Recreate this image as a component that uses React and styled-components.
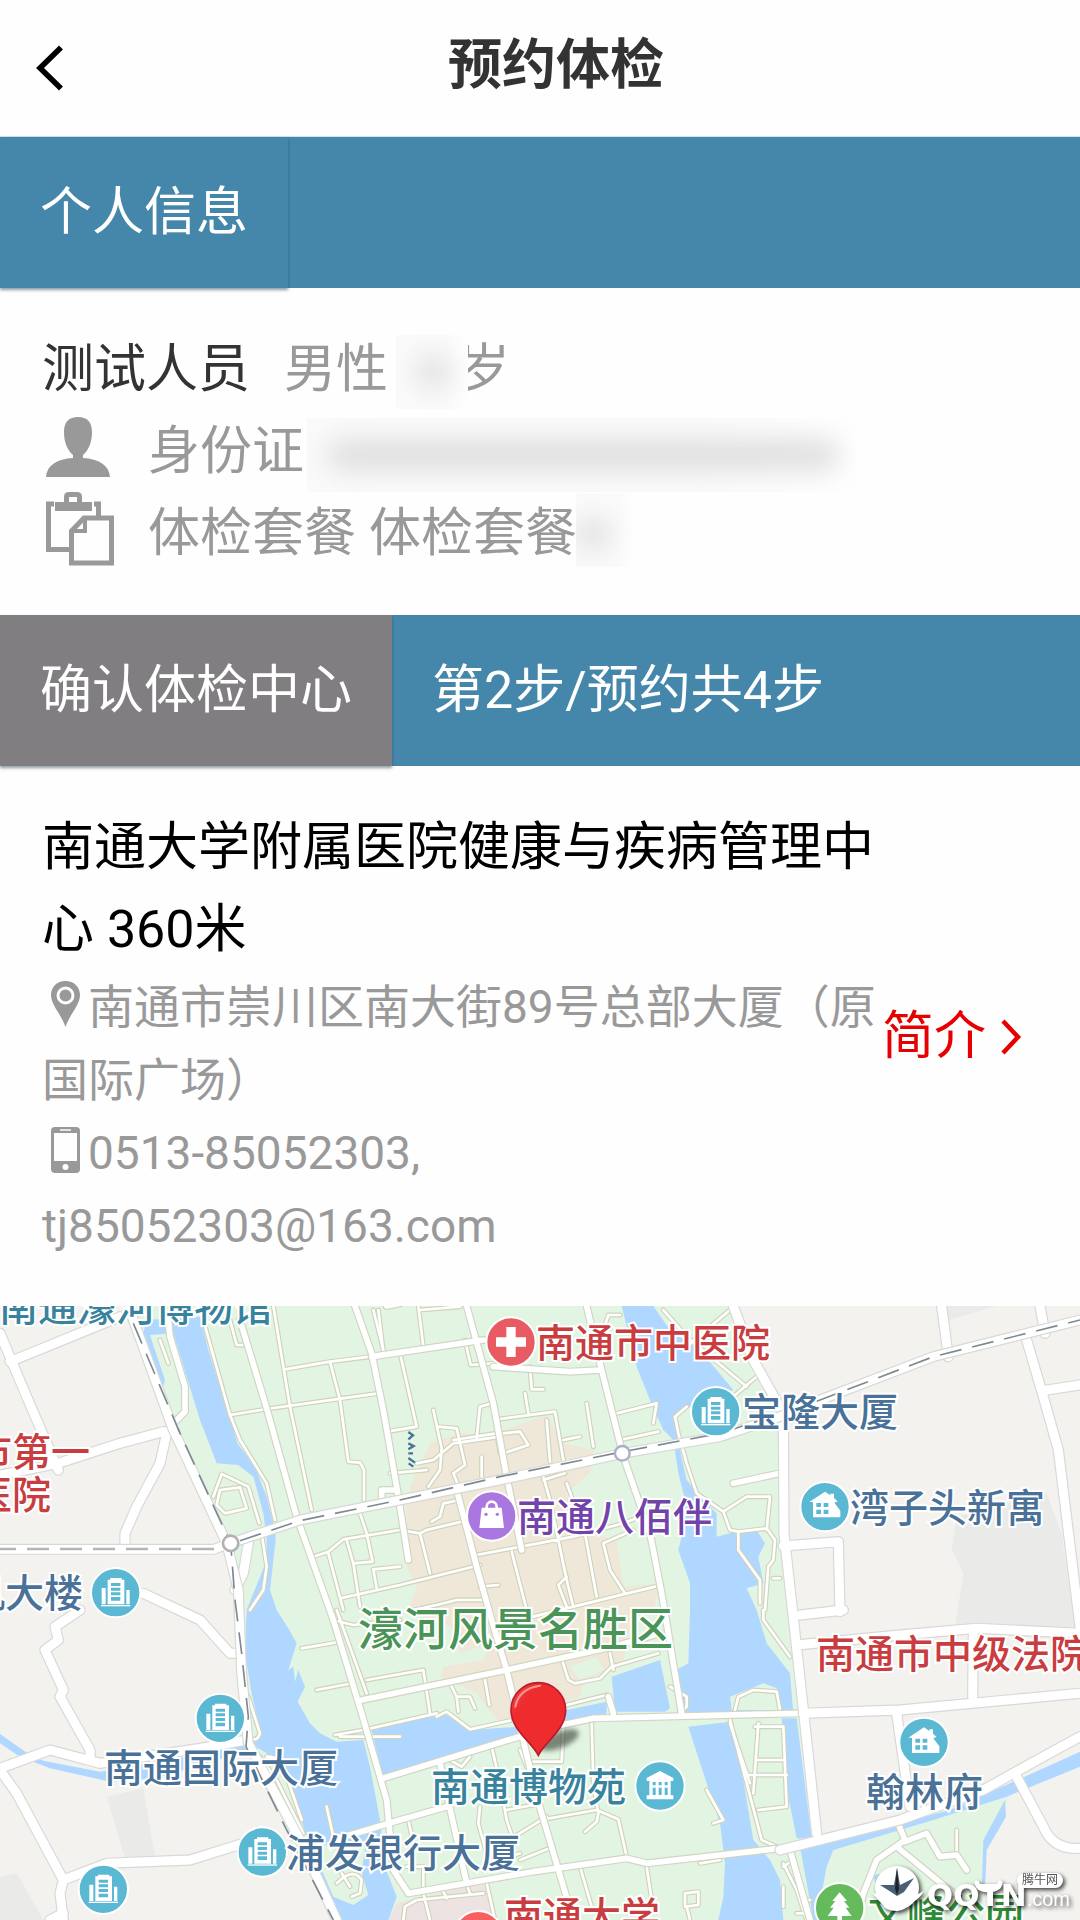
import React from 'react';
import styled, { createGlobalStyle } from 'styled-components';

const GlobalStyle = createGlobalStyle`
  * { box-sizing: border-box; }
  body {
    margin: 0;
    background: #fefefe;
    color: #333;
    font-family: Roboto, "Noto Sans CJK SC", sans-serif;
  }
  h1, h2, p { margin: 0; font-weight: 400; }
`;

const Page = styled.div`
  display: flex;
  flex-direction: column;
`;

const Header = styled.header`
  display: flex;
  align-items: center;
  height: 137px;
  padding: 0 48px 0 28px;
  border-bottom: 1px solid #cfe4ee;
`;

const BackButton = styled.button`
  display: flex;
  width: 52px;
  padding: 0 8px;
  border: 0;
  background: none;
`;

const Title = styled.h1`
  flex: 1;
  padding-bottom: 4px;
  font-size: 54px;
  font-weight: 700;
  line-height: 80px;
  text-align: center;
`;

const Bar = styled.div`
  display: flex;
  height: 151px;
  background: #4587aa;
  color: #fff;
  font-size: 52px;
  line-height: 151px;
`;

const Tab = styled.h2`
  padding: 0 40px;
  font-size: 52px;
  background: ${(p) => (p.$muted ? '#807e81' : '#4587aa')};
  box-shadow: 0 2px 3px rgba(30, 60, 80, 0.5);
`;

const Step = styled.p`
  padding: 0 40px;
`;

const Person = styled.section`
  padding: 41px 42px 40px;
  color: #999;
  font-size: 52px;
  line-height: 82px;
`;

const Row = styled.div`
  display: flex;
  align-items: center;
  height: 82px;
`;

const Name = styled.span`
  margin-right: 34px;
  color: #333;
`;

const IconCell = styled.span`
  display: flex;
  flex: none;
  width: 106px;
  padding: 0 0 10px 4px;
`;

const Hidden = styled.span`
  position: relative;
  display: inline-block;
  width: ${(p) => p.$space}px;
  height: 82px;
`;

const Smudge = styled.span`
  position: absolute;
  top: ${(p) => p.$top}px;
  left: ${(p) => p.$left}px;
  width: ${(p) => p.$width}px;
  height: 74px;
  overflow: hidden;
  background: linear-gradient(90deg, #fafafa 70%, #fefefe);

  &::before {
    content: '';
    position: absolute;
    inset: ${(p) => (p.$edge ? '26px 24px 18px 0' : '22px 18px 22px 20px')};
    border-radius: 16px;
    background: #dedede;
    filter: blur(13px);
  }
`;

const Center = styled.section`
  display: flex;
  align-items: center;
  padding: 0 42px;
`;

const CenterText = styled.div`
  flex: 0 1 840px;
  padding: 41px 0 43px;
`;

const CenterName = styled.h2`
  color: #000;
  font-size: 52px;
  line-height: 82px;
`;

const Detail = styled.p`
  color: #999;
  font-size: 46px;
  line-height: 73px;

  svg { margin: 0 8px 0 9px; vertical-align: -4px; }
`;

const Intro = styled.a`
  display: flex;
  flex: none;
  align-items: center;
  gap: 14px;
  padding-top: 2px;
  color: #e60000;
  font-size: 52px;
  line-height: 82px;
  text-decoration: none;
`;

const Map = styled.section`
  position: relative;
  height: 614px;
  overflow: hidden;
  background: #f3f2ef;
`;

const MapArt = styled.svg`
  display: block;
  width: 100%;
  height: 100%;
`;

const colours = {
  red: '#c93d40',
  blue: '#4a7298',
  teal: '#37839d',
  purple: '#7243a9',
  green: '#4a9458',
  darkGreen: '#2f8a37',
};

const Label = styled.span`
  position: absolute;
  left: ${(p) => p.$x}px;
  top: ${(p) => p.$y}px;
  color: ${(p) => colours[p.$tone]};
  font-size: ${(p) => (p.$large ? 45 : 39)}px;
  font-weight: 500;
  line-height: 64px;
  white-space: nowrap;
  paint-order: stroke fill;
  -webkit-text-stroke: 4px #fff;
`;

const Watermark = styled.div`
  position: absolute;
  right: 8px;
  bottom: 0;
  width: 200px;
  height: 58px;
  color: #fff;
  filter: drop-shadow(2px 2px 2px rgba(0, 0, 0, 0.75));
`;

const MarkLogo = styled.svg`
  position: absolute;
  left: 0;
  top: 3px;
`;

const MarkName = styled.span`
  position: absolute;
  right: 2px;
  bottom: 5px;
  display: flex;
  align-items: baseline;
  font: 700 31px/32px "DejaVu Sans", sans-serif;
`;

const MarkSuffix = styled.span`
  font: 400 20px/32px "Liberation Sans", sans-serif;
`;

const MarkBadge = styled.span`
  position: absolute;
  right: 9px;
  top: 11px;
  padding: 0 5px;
  border-radius: 8px;
  background: #fff;
  color: #555;
  font-size: 12px;
  line-height: 15px;
`;

const labels = [
  ['南通濠河博物馆', -1, -30, 'teal'],
  ['南通市中医院', 536, 6, 'red'],
  ['宝隆大厦', 742, 75, 'blue'],
  ['市第一', -27, 115, 'red'],
  ['医院', -27, 158, 'red'],
  ['湾子头新寓', 850, 171, 'blue'],
  ['南通八佰伴', 517, 180, 'purple'],
  ['机大楼', -34, 256, 'blue'],
  ['濠河风景名胜区', 358, 293, 'green', true],
  ['南通市中级法院', 816, 317, 'red'],
  ['南通国际大厦', 104, 431, 'blue'],
  ['南通博物苑', 431, 450, 'teal'],
  ['翰林府', 866, 455, 'blue'],
  ['浦发银行大厦', 286, 516, 'blue'],
  ['文峰公园', 868, 575, 'darkGreen'],
  ['南通大学', 504, 579, 'red'],
];

// The map is drawn at three units per pixel.
const water = [
  'M440 60L600 50L625 150L650 230L690 350L712 430L765 500L800 590L825 690L827 720L810 870L830 930L865 985L890 1030L865 1110L880 1100L885 1145L895 1110L915 1160L893 1205L930 1270L960 1300L1010 1325L1090 1320L1110 1400L1140 1560L1155 1700L1190 1790L1165 1860H1020L950 1690L910 1580L865 1430L800 1360L750 1330L780 1290L755 1180L735 1060L740 930L800 780L800 720L790 640L760 530L715 495L650 490L600 360L560 230L520 100L450 105L495 240L490 260L470 220L430 100Z',
  'M1115 1290L1330 1240L1410 1290L1560 1280L1700 1230L1820 1205V1240L1540 1310L1150 1435Z',
  'M1835 1130L1980 1080L2010 1225L1995 1235H1845Z',
  'M1865 18L1910 200L1950 300L1990 390L2020 420L2035 520L2055 600L2050 690L2035 750L2070 850V930L2065 1090L2020 1115L2045 1240H2380L2370 1120L2300 1030L2270 930L2240 865L2290 850L2275 770L2295 730L2270 690L2190 700L2150 710V640L2110 600L2060 540L2040 450L2020 350L2060 325L2200 270L2100 150L2010 90L1960 18Z',
  'M2065 1280L2190 1265L2230 1440L2260 1620L2310 1680L2340 1740L2350 1860H2155L2170 1790L2175 1690L2160 1570L2120 1450Z',
  'M2345 1255H2390L2435 1615H2390L2365 1490Z',
  'M2400 1640L2680 1575L2850 1530L3030 1450L3240 1355V1400L3020 1490L2800 1560L2500 1650L2480 1700L2465 1780L2475 1860H2440Z',
  'M3015 1500L2950 1620L2945 1780L2955 1770L2960 1650L3018 1550Z',
  'M0 1302L90 1365L130 1382L300 1415L560 1370L740 1330L750 1350L470 1435L330 1445L150 1405L60 1370L0 1330Z',
  'M2620 1725L2680 1715L2720 1770L2700 1840L2640 1800Z',
];

const beige =
  'M1225 600L1230 560L1290 430L1380 400L1480 400L1640 345L1690 430L1780 450L1770 520L1700 580L1730 690L1850 720L1870 860L1985 850L1960 930L1890 980L1870 1080L1750 1150L1740 1190L1560 1255L1490 1260L1430 1180L1320 1130L1330 1100L1450 1080L1470 1030L1380 1060L1350 980L1225 930L1250 860L1220 800V600Z';

const paths = [
  'M1110 170L990 185L855 208M820 18L870 320L935 630M990 185L1020 300L1045 485L1080 488L1092 510V600M1135 30L1150 155M610 60L690 345L720 420L800 550L825 660M690 345L800 327L1135 280M690 60L710 135H735',
  'M480 120L505 190M640 590L665 522L745 560L778 670M660 570L720 562L740 625L675 640L650 615Z',
  'M785 700L800 800L790 870L750 930M940 770L985 755L1030 718L1200 690M1080 640L1100 700L1118 785L1060 790L1040 720M1060 790L1080 920M985 760L1030 930M1020 895L1200 855L1440 795M1200 800L1120 808L1130 865',
  'M1260 30L1380 20M1255 18L1270 140M1150 150L1120 30M1395 120L1412 195L1480 190M1590 200L1595 268H1630M1575 280L1585 340M1500 357L1665 335L1690 480M1200 160L1250 380L1160 395M1300 330L1325 445L1320 510L1285 560M1315 380L1370 385L1395 495L1360 520L1380 570M1430 415L1440 320L1475 310M1360 420L1490 400L1500 460',
  'M1510 400L1560 395L1585 435L1510 460M1640 360L1650 485M1690 420L1740 410M1760 310L1780 440M1445 470V530M1170 520L1280 510M1250 490L1300 480L1360 430L1500 410M1850 340L1970 310M1860 420L1975 395M1970 310L1960 370M1810 90L1825 45H1860',
  'M1630 530L1650 600L1700 840L1720 920M1630 540L1695 520M1700 550L1755 700L1790 890M1430 765L1720 710L1870 670L1920 650M1535 755L1580 930M1280 690L1385 665M1280 690L1260 700L1200 690M1380 600L1330 610L1320 650L1295 665M1260 700L1290 820M1900 690L1810 730L1830 810L1875 880M1600 950L1720 920L1965 860M1700 830L1675 855L1700 920M1440 860L1495 855M1240 930L1310 915L1370 900H1450',
  'M1010 930L1100 1180M1100 1140L1270 1110L1290 1240M905 1045L1005 1028M950 1170L1045 1152M1005 1305L1090 1290M1000 960L1060 975L1200 960M1350 1150L1370 1190H1410L1425 1225M1370 1190L1375 1235M1455 1140L1468 1215M1310 1250L1340 1235L1410 1288L1530 1262M1090 1290L1310 1240M1200 1310L1020 1310M1820 1185L1700 1215',
  'M1685 1075L1705 1140L1725 1150L1800 1135L1835 1100L1975 1060M1830 1060L1840 1110M1350 1380L1385 1400L1410 1370M1475 1340L1500 1450L1520 1560L1540 1620M1560 1350L1580 1400M1690 1280L1685 1385H1600M1775 1270L1780 1450L1795 1540L1790 1565L1755 1595M1620 1560L1790 1530L1855 1558L1880 1670M1535 1615L1640 1550M1520 1530L1600 1515M1440 1520L1435 1570L1460 1660L1480 1700M1560 1680L1660 1640M1500 1680L1560 1660',
  'M1225 1560L1240 1630M1220 1700H1270V1780L1290 1860M1325 1765L1340 1795M1460 1750L1485 1860M1740 1700L1775 1820M1940 1700L1955 1800M1210 1860L1215 1820L1250 1800L1450 1780M1400 1755L1410 1780M2055 1780L2095 1775V1815L2055 1820ZM2060 1820L2070 1860M980 1520L1000 1610M1010 1750Q1060 1700 1085 1740L1080 1780L1055 1790M1025 1720L1050 1760',
  'M780 1370L830 1440L910 1600M800 1370Q850 1370 860 1430L905 1560M790 1440L900 1610M745 1190L780 1300Q770 1330 745 1310',
  'M1990 30L2060 110L2240 260M2190 30L2130 80L2060 140M2270 230L2240 255L2200 290M2060 320L2025 350L2035 400L2060 490L2090 580L2170 635L2240 590H2310L2300 690M2170 635L2190 690L2215 695V750L2280 840V910M2215 695L2300 685L2325 720L2320 780L2305 800L2295 930M2320 835H2340',
  'M2290 930V960L2370 1070M2205 1230L2215 1190L2260 1170L2330 1175L2340 1230M2190 1260L2285 1620L2330 1640M2265 1280H2350L2360 1520L2275 1530M2270 1380H2355M2240 1425H2360M2275 1270L2260 1480M2350 1690L2390 1770L2420 1860M2380 1680L2350 1700M2400 1800H2430M2390 1840H2430',
  'M2870 1590V1665',
  'M2100 1690L2160 1680M2120 1470L2170 1560L2140 1570M2350 1760V1820M2010 1160L2060 1190V1220L2040 1240M2190 1270L2250 1450',
];

const streets = [
  'M1065 18L1115 160L1150 330L1195 590L1225 780M1400 18L1480 310L1520 530L1565 750',
  'M1115 170L1450 120M1480 200L1710 215L1800 210M1760 18L1805 210L1870 470L1950 700L1985 880L2045 1240M1370 570L1430 800L1475 960L1520 1110L1610 1490L1720 1860M1160 18L1200 10',
  'M720 60L800 325L890 650L1000 960L1085 1240L1160 1500L1180 1710L1225 1780L1600 1715L1880 1675L1940 1690L2340 1645',
  'M1085 1200L1520 1110L1840 1040L1980 1000M1150 1435L1640 1285L1780 1255L2400 1240M1000 1620L1200 1560L1340 1520M1320 1390L1400 1750M1825 1190L1840 1240M1145 600V570H1190',
  'M2200 550L2340 520M505 60L510 110L555 260V335L525 365M2690 1560L2715 1620L2630 1680L2590 1780L2570 1860M2370 1650L2430 1860M2690 1640L2860 1780',
  'M2715 1625L2780 1600L2820 1670L2870 1665L2900 1710',
];

const mains = [
  'M0 100L80 290L175 510M30 185L360 50M0 525L175 490L360 430L490 395H525M500 400L480 490L410 620L375 700V740M430 880L600 960L690 1060H720',
  'M240 930L165 980L175 1020L135 1050L190 1170L180 1190L270 1350V1380M0 1405L150 1350L300 1390L600 1345L740 1320M0 1410L50 1480L190 1740L320 1690L570 1680L730 1630M190 1740L180 1780L190 1860M150 1860L190 1840M745 730L730 820L705 870',
  'M2200 18L2260 180L2350 340L2352 700L2385 1000L2420 1320L2450 1600M2350 738L2515 725L2520 935M2400 945L2530 930M2390 1035L2700 1005L2930 985L3240 1000M2920 1000L2918 1190M2410 1240L2700 1230L3240 1180M2690 1240L2730 1520',
  'M2825 18L2845 170M3120 18L3135 100M3080 120L3130 290L3175 450L3230 900L3240 980M3140 270L3240 255M3050 1430L3130 1580Q3160 1650 3240 1645',
  'M2340 1650L2700 1560L2950 1470L3130 1370L3240 1310',
];

const railRoads = [
  'M385 18L520 390L680 730L715 870L725 1120L745 1330L900 1620L1010 1860',
  'M0 748H640L720 720L900 660L1200 600L1500 540L1870 460L2160 410L2340 350L2460 300L2800 170L3240 60',
];

const Building = () => (
  <g fill="#fff">
    <path d="M-42 -14h12v49h-12zM32 -8h10v43H32zM-24 -39h8v-5h34v5h8V35h-50z" />
    <path d="M-44 37h88v4h-88z" />
    <g fill="#5ab8d3">
      <path d="M-14 -29h28v9h-28zM-14 -15h28v9h-28zM-14 -1h28v9h-28zM-14 13h28v11h-28z" />
    </g>
  </g>
);

const House = () => (
  <g fill="#fff">
    <path d="M-47 -14L0 -45L16 -34V-39H27V-26L38 -16L28 -12L46 12V32H-36V-14Z" />
    <path fill="#5ab8d3" d="M-26 -11h14v12h-14zM-4 -11h14v12H-4zM-26 9h14v13h-14zM-4 9h14v13H-4z" />
  </g>
);

const Museum = () => (
  <path
    fill="#fff"
    fillRule="evenodd"
    d="M-40 -24L0 -45L40 -24V-15H32V28H40V40H-40V28H-32V-15H-40ZM-22 -12v10h9v-10zM-4 -12v10h9v-10zM14 -12v10h9v-10zM-22 5v22h9v-22zM-4 5v22h9v-22zM14 5v22h9v-22z"
  />
);

const Bag = () => (
  <g>
    <path d="M-15 -20v-8a15 15 0 0 1 30 0v8" fill="none" stroke="#fff" strokeWidth="8" />
    <path d="M-30 -25H30L37 36H-37Z" fill="#fff" />
    <circle cx="-17" cy="-5" r="5" fill="#a977df" />
    <circle cx="17" cy="-5" r="5" fill="#a977df" />
  </g>
);

const Cross = () => <path d="M-14 -45h28v31h31v28H14v31h-28V14h-31v-28h31z" fill="#fff" />;

const Tree = () => (
  <path d="M0 -46L22 -20H13L29 0H18L36 25H7V40H-7V25H-36L-18 0H-29L-13 -20H-22Z" fill="#fff" />
);

const places = [
  [1533, 126, '#e85b62', Cross],
  [2147, 335, '#5ab8d3', Building],
  [2475, 620, '#5ab8d3', House],
  [1475, 648, '#a977df', Bag],
  [347, 878, '#5ab8d3', Building],
  [661, 1255, '#5ab8d3', Building],
  [2772, 1327, '#5ab8d3', House],
  [1980, 1458, '#5ab8d3', Museum],
  [787, 1656, '#5ab8d3', Building],
  [310, 1768, '#5ab8d3', Building],
  [2519, 1823, '#65bb5c', Tree],
  [1435, 1907, '#f8605f', Cross],
];

const Roads = ({ lines, width, edge }) => (
  <g fill="none" strokeLinecap="round" strokeLinejoin="round">
    {lines.map((d) => <path key={d} d={d} stroke={edge} strokeWidth={width + 7} />)}
    {lines.map((d) => <path key={d} d={d} stroke="#fff" strokeWidth={width} />)}
  </g>
);

const CityMap = () => (
  <MapArt viewBox="0 18 3240 1842" preserveAspectRatio="xMidYMin slice" aria-hidden="true">
    <defs>
      <filter id="soft" x="-50%" y="-50%" width="200%" height="200%">
        <feGaussianBlur stdDeviation="8" />
      </filter>
      <linearGradient id="pin" x1="0" y1="0" x2="1" y2="1">
        <stop offset="0" stopColor="#f2504f" />
        <stop offset="0.25" stopColor="#ee2c2e" />
      </linearGradient>
    </defs>
    <path fill="#eaeae9" d="M2870 650L3140 580L3185 700L3225 990L2865 980L2890 820L2855 750ZM320 1490L430 1465L465 1670L375 1675ZM0 1730L50 1720L130 1860H0ZM2840 18H2990L2845 60Z" />
    <path fill="#e2f5e2" d="M400 18L520 400L690 730L715 900L720 1060L745 1330L900 1680L1010 1860H2950L2945 1750L2960 1610L3015 1530L3030 1475L2440 1640L2400 1280L2340 700L2350 350L2250 150L2190 18Z" />
    <path fill="#efe8d8" d={beige} />
    <path fill="#e2f5e2" d="M1855 730L1880 860L1955 840L1930 740ZM1710 1100L1790 1070L1810 1110L1740 1140Z" />
    <path fill="#eee3e3" d="M1165 1860L1190 1810L1400 1760L1450 1755L1490 1860Z" />
    {water.map((d) => <path key={d} d={d} fill="#b0d7ff" />)}
    <path fill="#e2f5e2" d="M940 1650L1000 1790L1060 1815L1105 1785L1085 1720L1095 1640L990 1630ZM2195 1230L2190 1190L2290 1150L2330 1165L2340 1230ZM2640 1700L2750 1760L2690 1800Z" />
    <Roads lines={paths} width={8} edge="#d0d3bb" />
    <Roads lines={streets} width={17} edge="#d0d6c2" />
    <Roads lines={mains} width={27} edge="#d8d8d8" />
    <Roads lines={railRoads} width={26} edge="#d6d9d5" />
    <path d="M0 747H650" fill="none" stroke="#b5b5b5" strokeWidth="7" strokeDasharray="66 33" strokeDashoffset="18" />
    <path
      d="M400 70L540 400L692 730L705 900L725 1060L745 1250L738 1340L860 1590L1000 1860M720 722L900 662L1200 600L1500 530L1870 455L2160 400L2340 342L2460 300L2800 170L3240 60"
      fill="none"
      stroke="#7e8a90"
      strokeWidth="5"
      strokeDasharray="66 33"
    />
    <path d="M1225 396l14 10-14 12M1225 430l16 8-16 10M1225 460h14M1225 474l20 14M1226 490l14 10" fill="none" stroke="#4a7298" strokeWidth="7" />
    <circle cx="692" cy="730" r="23" fill="#fff" stroke="#b2b2b2" strokeWidth="8" />
    <circle cx="1867" cy="460" r="22" fill="#fff" stroke="#a9afc6" strokeWidth="7" />
    {places.map(([x, y, fill, Glyph]) => (
      <g key={`${x}-${y}`} transform={`translate(${x} ${y})`}>
        <circle r="74" fill={fill} stroke="#fff" strokeWidth="6" />
        <Glyph />
      </g>
    ))}
    <ellipse cx="1678" cy="1320" rx="62" ry="24" fill="#3f4a3f" opacity="0.65" filter="url(#soft)" transform="rotate(-22 1678 1320)" />
    <path d="M1615 1366C1595 1325 1533 1290 1533 1230A82 82 0 0 1 1697 1230C1697 1290 1635 1325 1615 1366Z" fill="url(#pin)" stroke="#bd1b2c" strokeWidth="5" />
    <path d="M1546 1220Q1556 1166 1620 1157" fill="none" stroke="#fa9a92" strokeWidth="6" strokeLinecap="round" />
  </MapArt>
);

export default function App() {
  return (
    <Page>
      <GlobalStyle />
      <Header>
        <BackButton type="button" aria-label="返回">
          <svg width="28" height="46" viewBox="0 0 28 46">
            <path d="M25 2.500L4 23L25 43.500" fill="none" stroke="#000" strokeWidth="5.500" />
          </svg>
        </BackButton>
        <Title>预约体检</Title>
      </Header>

      <Bar>
        <Tab>个人信息</Tab>
      </Bar>
      <Person>
        <Row>
          <Name>测试人员</Name>
          <span>男性</span>
          <Hidden $space={70}><Smudge $top={6} $left={8} $width={72} /></Hidden>
          <span>岁</span>
        </Row>
        <Row>
          <IconCell>
            <svg width="64" height="60" viewBox="0 0 64 60" fill="#999">
              <path d="M32 0C41 0 46 5 46 15C46 26 42 34 37 38V41C53 42 63 48 64 60H0C1 48 11 42 27 41V38C22 34 18 26 18 15C18 5 23 0 32 0Z" />
            </svg>
          </IconCell>
          <span>身份证</span>
          <Hidden $space={560}><Smudge $top={7} $left={3} $width={550} /></Hidden>
        </Row>
        <Row>
          <IconCell>
            <svg width="68" height="74" viewBox="0 0 68 74" fill="none" stroke="#999">
              <path d="M8 12H2.500V57.500H23M48 12H52.500V24" strokeWidth="5" />
              <path d="M9 10H18V5Q18 0 23 0H31Q36 0 36 5V10H46V19H9ZM23 5V10H31V5Z" fill="#999" fillRule="evenodd" stroke="none" />
              <path d="M38 26H65.500V71H25.500V39Z" strokeWidth="5" />
              <path d="M39 27V39H26" strokeWidth="4" />
            </svg>
          </IconCell>
          <span>体检套餐 体检套餐</span>
          <Hidden $space={60}><Smudge $top={0} $left={-1} $width={58} $edge /></Hidden>
        </Row>
      </Person>

      <Bar>
        <Tab $muted>确认体检中心</Tab>
        <Step>第2步/预约共4步</Step>
      </Bar>
      <Center>
        <CenterText>
          <CenterName>南通大学附属医院健康与疾病管理中心 360米</CenterName>
          <Detail>
            <svg width="29" height="46" viewBox="0 0 29 46">
              <path d="M14.500 0C23 0 29 6 29 14C29 24 19 33 14.500 46C10 33 0 24 0 14C0 6 6 0 14.500 0Z" fill="#999" />
              <circle cx="14.500" cy="14.500" r="7.500" fill="#999" stroke="#fefefe" strokeWidth="3" />
            </svg>
            南通市崇川区南大街89号总部大厦（原国际广场）
          </Detail>
          <Detail>
            <svg width="29" height="46" viewBox="0 0 29 46">
              <rect width="29" height="46" rx="4" fill="#999" />
              <path d="M3 6H26V34H3Z" fill="#fefefe" />
              <path d="M9 3H20" stroke="#fefefe" strokeWidth="1.500" />
              <circle cx="14.500" cy="40" r="3" fill="#fefefe" />
            </svg>
            0513-85052303,
          </Detail>
          <Detail>tj85052303@163.com</Detail>
        </CenterText>
        <Intro href="#intro">
          简介
          <svg width="22" height="36" viewBox="0 0 22 36">
            <path d="M3 2L18 18L3 34" fill="none" stroke="#e60000" strokeWidth="4.500" />
          </svg>
        </Intro>
      </Center>

      <Map aria-label="地图">
        <CityMap />
        {labels.map(([text, x, y, tone, large]) => (
          <Label key={text} $x={x} $y={y} $tone={tone} $large={large}>{text}</Label>
        ))}
        <Watermark>
          <MarkLogo width="200" height="50" viewBox="0 0 200 50">
            <circle cx="25" cy="23" r="22" fill="#fff" />
            <path d="M25 3L28 20L42 13L32 27L25 31L19 27L8 20L22 20Z" fill="#476078" />
            <path d="M25 3L27 24L25 30L23 24Z" fill="#222" />
            <path d="M0 27Q24 42 52 26Q44 40 32 38Q38 44 25 46Q12 46 10 38Q4 34 0 27Z" fill="#fff" />
            <path d="M105 18Q106 25 116 25Q127 25 128 18" fill="none" stroke="#fff" strokeWidth="5" strokeLinecap="round" />
          </MarkLogo>
          <MarkName>QQTN<MarkSuffix>.com</MarkSuffix></MarkName>
          <MarkBadge>腾牛网</MarkBadge>
        </Watermark>
      </Map>
    </Page>
  );
}
